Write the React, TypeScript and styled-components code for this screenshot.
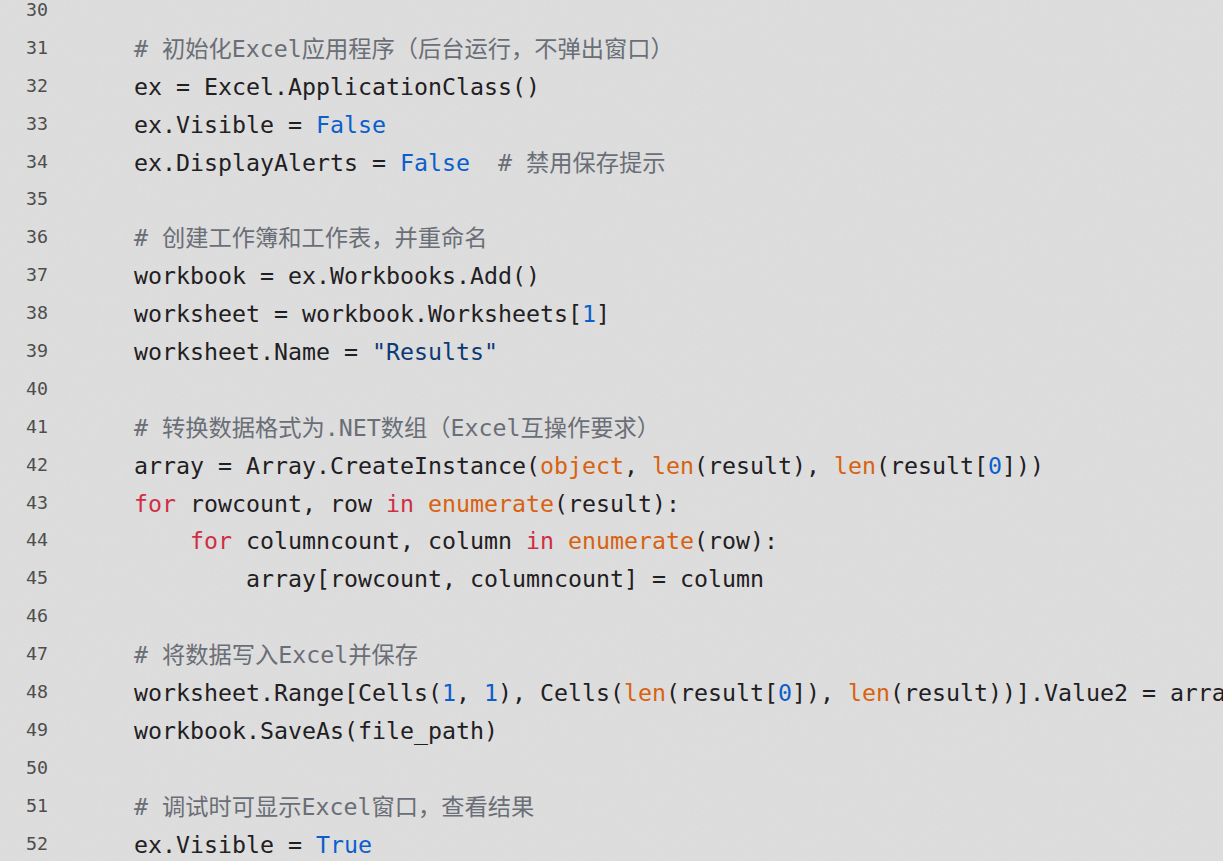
import React from "react";
import styled, { createGlobalStyle } from "styled-components";

const noise =
  "data:image/svg+xml;utf8," +
  encodeURIComponent(
    `<svg xmlns='http://www.w3.org/2000/svg' width='240' height='240'><filter id='n'><feTurbulence type='fractalNoise' baseFrequency='0.9' numOctaves='2' stitchTiles='stitch'/><feColorMatrix type='saturate' values='0'/></filter><rect width='100%' height='100%' filter='url(#n)' opacity='0.09'/></svg>`
  );

const Global = createGlobalStyle`
  html, body {
    margin: 0;
    padding: 0;
    width: 1223px;
    height: 861px;
    overflow: hidden;
    background-color: #dedede;
    background-image: url("${noise}");
  }
`;

const Editor = styled.div`
  display: flex;
  flex-direction: column;
  margin-top: -8px;
  width: 1223px;
  height: 869px;
  overflow: hidden;
  font-family: "DejaVu Sans Mono", "Noto Sans CJK SC", monospace;
`;

const Row = styled.div`
  display: grid;
  grid-template-columns: 48px max-content;
  column-gap: 30px;
  align-items: center;
  height: 37.9px;
  flex: 0 0 37.9px;
`;

const LineNo = styled.span`
  text-align: right;
  font-family: "DejaVu Sans Mono", monospace;
  font-size: 18.3px;
  line-height: 37.9px;
  color: #4e4e4e;
  margin-top: -2px;
`;

const Code = styled.span`
  white-space: pre;
  font-size: 23.25px;
  line-height: 37.9px;
  color: #1f2023;
`;

type Kind = "t" | "c" | "k" | "b" | "n" | "s";

const colors: Record<Kind, string> = {
  t: "#1f2023",
  c: "#6a6e76",
  k: "#cf2e45",
  b: "#d8620f",
  n: "#0b5fcc",
  s: "#0c3a74",
};

const Tok = styled.span<{ $kind: Kind }>`
  color: ${(p) => colors[p.$kind]};
  font-family: "DejaVu Sans Mono", "Noto Sans CJK SC", monospace;
`;

type Line = [Kind, string][];

const I = "    ";

const lines: Line[] = [
  [],
  [["c", I + "# 初始化Excel应用程序（后台运行，不弹出窗口）"]],
  [["t", I + "ex = Excel.ApplicationClass()"]],
  [["t", I + "ex.Visible = "], ["n", "False"]],
  [["t", I + "ex.DisplayAlerts = "], ["n", "False"], ["t", "  "], ["c", "# 禁用保存提示"]],
  [],
  [["c", I + "# 创建工作簿和工作表，并重命名"]],
  [["t", I + "workbook = ex.Workbooks.Add()"]],
  [["t", I + "worksheet = workbook.Worksheets["], ["n", "1"], ["t", "]"]],
  [["t", I + "worksheet.Name = "], ["s", '"Results"']],
  [],
  [["c", I + "# 转换数据格式为.NET数组（Excel互操作要求）"]],
  [
    ["t", I + "array = Array.CreateInstance("],
    ["b", "object"],
    ["t", ", "],
    ["b", "len"],
    ["t", "(result), "],
    ["b", "len"],
    ["t", "(result["],
    ["n", "0"],
    ["t", "]))"],
  ],
  [
    ["k", I + "for"],
    ["t", " rowcount, row "],
    ["k", "in"],
    ["t", " "],
    ["b", "enumerate"],
    ["t", "(result):"],
  ],
  [
    ["k", I + I + "for"],
    ["t", " columncount, column "],
    ["k", "in"],
    ["t", " "],
    ["b", "enumerate"],
    ["t", "(row):"],
  ],
  [["t", I + I + I + "array[rowcount, columncount] = column"]],
  [],
  [["c", I + "# 将数据写入Excel并保存"]],
  [
    ["t", I + "worksheet.Range[Cells("],
    ["n", "1"],
    ["t", ", "],
    ["n", "1"],
    ["t", "), Cells("],
    ["b", "len"],
    ["t", "(result["],
    ["n", "0"],
    ["t", "]), "],
    ["b", "len"],
    ["t", "(result))].Value2 = array"],
  ],
  [["t", I + "workbook.SaveAs(file_path)"]],
  [],
  [["c", I + "# 调试时可显示Excel窗口，查看结果"]],
  [["t", I + "ex.Visible = "], ["n", "True"]],
];

export default function App() {
  return (
    <>
      <Global />
      <Editor>
        {lines.map((line, i) => (
          <Row key={i}>
            <LineNo>{30 + i}</LineNo>
            <Code>
              {line.length === 0
                ? " "
                : line.map(([k, text], j) => (
                    <Tok key={j} $kind={k}>
                      {text}
                    </Tok>
                  ))}
            </Code>
          </Row>
        ))}
      </Editor>
    </>
  );
}
